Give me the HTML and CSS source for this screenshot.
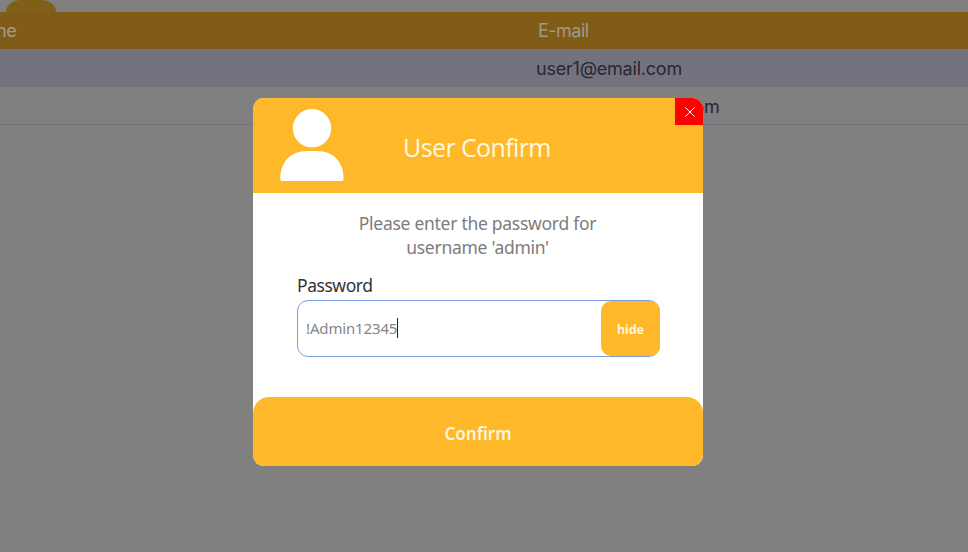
FILE: index.html
```html
<!DOCTYPE html>
<html lang="en">
<head>
<meta charset="utf-8">
<title>User Confirm</title>
<link rel="stylesheet" href="styles.css">
</head>
<body>
<main class="page">
  <div class="toolbar"><span class="tab"></span></div>
  <div class="row head"><span class="name">me</span><span class="mail">E-mail</span></div>
  <div class="row selected"><span class="name"></span><span class="mail">user1@email.com</span></div>
  <div class="row last"><span class="name"></span><span class="mail">newuser2@email.com</span></div>
</main>
<div class="overlay">
  <section class="modal">
    <header class="modal-head">
      <svg class="avatar" viewBox="0 0 64 73" width="64" height="73"><circle cx="32" cy="19.3" r="19.2"/><path d="M0.3 70V69C0.3 53 11 42 27 42H37C53 42 63.5 53 63.5 69V70Q63.5 71.9 61.8 71.9H2Q0.3 71.9 0.3 70Z"/></svg>
      <h1>User Confirm</h1>
      <button class="close" aria-label="Close"><svg viewBox="0 0 10 10" width="10" height="10"><path d="M.4.4 9.6 9.6M9.6.4.4 9.6"/></svg></button>
    </header>
    <div class="modal-body">
      <p>Please enter the password for<br>username 'admin'</p>
      <div class="label">Password</div>
      <div class="field">
        <div class="value">!Admin12345<i class="caret"></i></div>
        <button class="hide">hide</button>
      </div>
    </div>
    <button class="confirm">Confirm</button>
  </section>
</div>
</body>
</html>
```
FILE: styles.css
```css
* { box-sizing: border-box; }
body { margin: 0; height: 552px; overflow: hidden; background: #808080; }
button { border: 0; padding: 0; margin: 0; font: inherit; color: inherit; }

.page { font-family: Inter, sans-serif; font-size: 18px; letter-spacing: -0.22px; color: #282733; }
.toolbar { height: 12px; padding-left: 6px; }
.tab { display: block; width: 50px; height: 12px; background: #805f17; border-radius: 15px 15px 0 0 / 12px 12px 0 0; }
.row { display: flex; align-items: center; height: 38px; white-space: nowrap; }
.name { width: 536px; }
.head { height: 37px; background: #805c16; color: #a19a8c; letter-spacing: -0.5px; }
.head .name { text-indent: -9px; }
.head .mail { padding-left: 2px; }
.selected { background: #75727f; }
.last { border-bottom: 1px solid #74727f; letter-spacing: -0.28px; padding-top: 1px; }

.overlay { position: absolute; inset: 0; padding: 98px 265px 0 253px; font-family: "Noto Sans", "Open Sans", sans-serif; }
.modal { display: flex; flex-direction: column; height: 368.4px; background: #fff; border-radius: 11px; overflow: hidden; }
.modal-head { display: flex; height: 95px; background: #ffb829; color: #fff8e0; }
.avatar { flex: none; margin: 11px 0 0 27px; fill: #fff; }
h1 { flex: 1; margin: 0 0 0 59px; font-family: "Open Sans", sans-serif; font-size: 25px; font-weight: 400; letter-spacing: -0.6px; line-height: 98px; white-space: nowrap; }
.close { flex: none; display: flex; align-items: center; justify-content: center; width: 28px; height: 27px; padding-left: 1px; background: #f00; }
.close path { fill: none; stroke: #fff; stroke-width: 1; }
.modal-body { flex: 1; padding: 18px 43px 0 44px; }
p { margin: 0 2px 0 0; color: #7c7c7c; font-size: 17.5px; letter-spacing: -0.28px; line-height: 24px; text-align: center; white-space: nowrap; }
.label { margin-top: 14px; height: 24px; font-size: 17.5px; letter-spacing: -0.45px; line-height: 24px; color: #333; }
.field { display: flex; justify-content: space-between; height: 57px; margin-top: 3px; border: 1px solid #7d9de4; border-radius: 11px; }
.value { display: flex; align-items: center; padding: 0 0 2px 8px; font-size: 15px; letter-spacing: -0.15px; color: #858585; }
.caret { width: 1px; height: 20px; background: #222; }
.hide { width: 59px; padding-top: 1px; margin: 0 -1px 0 0; background: #ffb829; border-radius: 10px; color: #fff6dd; font-size: 12.5px; font-weight: 700; letter-spacing: -0.1px; }
.confirm { flex: none; height: 69px; padding-top: 3px; background: #ffb829; border-radius: 16px 16px 11px 11px; color: #fff6dd; font-size: 17px; font-weight: 600; }
```
